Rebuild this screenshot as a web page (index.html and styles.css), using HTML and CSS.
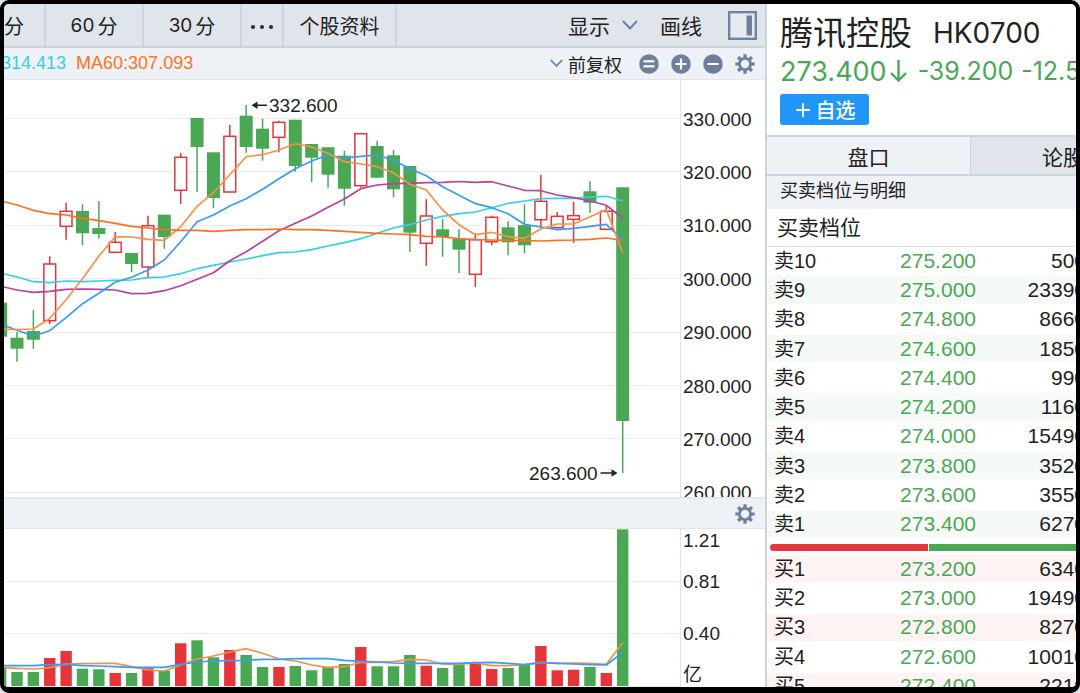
FILE: index.html
```html
<!DOCTYPE html>
<html lang="zh-CN">
<head>
<meta charset="utf-8">
<meta name="viewport" content="width=device-width, initial-scale=1">
<title>腾讯控股 HK0700</title>
<link rel="stylesheet" href="styles.css">
</head>
<body>
<svg class="defs" aria-hidden="true">
  <symbol id="gear" viewBox="0 0 20 20">
    <g fill="none" stroke="currentColor">
      <circle cx="10" cy="10" r="5.6" stroke-width="2.8"/>
      <path stroke-width="3.2" d="M10 0.3v3.4M10 16.3v3.4M0.3 10h3.4M16.3 10h3.4M3.1 3.1l2.4 2.4M14.5 14.5l2.4 2.4M3.1 16.9l2.4-2.4M14.5 5.5l2.4-2.4"/>
    </g>
  </symbol>
</svg>
<div class="frame">
  <main class="chart-side">
    <nav class="toolbar">
      <button class="tab tab-cut">分</button>
      <button class="tab tab-period"><span class="minutes">60</span><span>分</span></button>
      <button class="tab tab-period"><span class="minutes">30</span><span>分</span></button>
      <button class="tab tab-more" aria-label="更多">
        <svg width="24" height="6" viewBox="0 0 24 6"><g fill="#2b2f36"><circle cx="3" cy="3" r="2.1"/><circle cx="12" cy="3" r="2.1"/><circle cx="21" cy="3" r="2.1"/></g></svg>
      </button>
      <button class="tab tab-info">个股资料</button>
      <div class="tools">
        <button class="tool">显示
          <svg width="16" height="10" viewBox="0 0 16 10"><path d="M1 1l7 7.5L15 1" fill="none" stroke="#6f82a3" stroke-width="2"/></svg>
        </button>
        <button class="tool">画线</button>
        <button class="tool tool-panel" aria-label="侧栏">
          <svg width="29" height="29" viewBox="0 0 29 29"><rect x="1.200" y="1.200" width="26.600" height="26.600" fill="#e6ebf1" stroke="#6f82a3" stroke-width="2.400"/><rect x="18.500" y="4.500" width="5.500" height="20" fill="#6f7f9d"/></svg>
        </button>
      </div>
    </nav>

    <div class="legend">
      <span class="ma30">314.413</span>
      <span class="ma60">MA60:307.093</span>
      <button class="adjust">
        <svg width="13" height="9" viewBox="0 0 13 9"><path d="M.8 1l5.700 6L12.200 1" fill="none" stroke="#6f7f9d" stroke-width="1.800"/></svg>
        前复权
      </button>
      <div class="legend-icons">
        <button aria-label="重置"><svg width="20" height="20" viewBox="0 0 20 20"><circle cx="10" cy="10" r="9.800" fill="#6f7f9d"/><rect x="4.500" y="6.200" width="11" height="2.200" fill="#fff"/><rect x="4.500" y="11.200" width="11" height="2.200" fill="#fff"/></svg></button>
        <button aria-label="放大"><svg width="20" height="20" viewBox="0 0 20 20"><circle cx="10" cy="10" r="9.800" fill="#6f7f9d"/><path d="M4.500 10h11M10 4.500v11" stroke="#fff" stroke-width="2.200"/></svg></button>
        <button aria-label="缩小"><svg width="20" height="20" viewBox="0 0 20 20"><circle cx="10" cy="10" r="9.800" fill="#6f7f9d"/><path d="M4.500 10h11" stroke="#fff" stroke-width="2.200"/></svg></button>
        <button aria-label="设置"><svg width="20" height="20"><use href="#gear"/></svg></button>
      </div>
    </div>

    <section class="plot-row price-row">
      <svg class="plot" id="price" viewBox="4 80 676 417" preserveAspectRatio="xMaxYMid slice"></svg>
      <div class="axis price-axis">
        <span>330.000</span><span>320.000</span><span>310.000</span><span>300.000</span>
        <span>290.000</span><span>280.000</span><span>270.000</span><span>260.000</span>
      </div>
    </section>

    <div class="sub-bar">
      <button aria-label="指标设置"><svg width="20" height="20"><use href="#gear"/></svg></button>
    </div>

    <section class="plot-row volume-row">
      <svg class="plot" id="volume" viewBox="4 529 676 158" preserveAspectRatio="xMaxYMid slice"></svg>
      <div class="axis volume-axis">
        <span>1.21</span><span>0.81</span><span>0.40</span><span>亿</span>
      </div>
    </section>
  </main>

  <aside class="quote-side">
    <header class="quote">
      <h1 class="name">腾讯控股 <span class="code">HK0700</span></h1>
      <p class="price">
        <span class="last">273.400</span>
        <svg class="fall" width="19" height="24" viewBox="0 0 19 24"><path d="M9.500 1v20M2 14l7.500 7.500L17 14" fill="none" stroke="#4aa854" stroke-width="2.400"/></svg>
        <span class="change">-39.200</span><span class="change">-12.54%</span>
      </p>
      <button class="watch"><svg width="14" height="14" viewBox="0 0 14 14"><path d="M0 7h14M7 0v14" stroke="#fff" stroke-width="1.800"/></svg>自选</button>
    </header>
    <div class="side-tabs">
      <button class="side-tab active">盘口</button>
      <button class="side-tab">论股</button>
    </div>
    <h2 class="group-title">买卖档位与明细</h2>
    <h3 class="book-title">买卖档位</h3>
    <table class="book sell">
      <tr><th>卖10</th><td>275.200</td><td>500</td></tr>
      <tr><th>卖9</th><td>275.000</td><td>23390</td></tr>
      <tr><th>卖8</th><td>274.800</td><td>8660</td></tr>
      <tr><th>卖7</th><td>274.600</td><td>1850</td></tr>
      <tr><th>卖6</th><td>274.400</td><td>990</td></tr>
      <tr><th>卖5</th><td>274.200</td><td>1160</td></tr>
      <tr><th>卖4</th><td>274.000</td><td>15490</td></tr>
      <tr><th>卖3</th><td>273.800</td><td>3520</td></tr>
      <tr><th>卖2</th><td>273.600</td><td>3550</td></tr>
      <tr><th>卖1</th><td>273.400</td><td>6270</td></tr>
    </table>
    <div class="ratio"><div class="ratio-buy" style="width:50%"></div><div class="ratio-sell"></div></div>
    <table class="book buy">
      <tr><th>买1</th><td>273.200</td><td>6340</td></tr>
      <tr><th>买2</th><td>273.000</td><td>19490</td></tr>
      <tr><th>买3</th><td>272.800</td><td>8270</td></tr>
      <tr><th>买4</th><td>272.600</td><td>10010</td></tr>
      <tr><th>买5</th><td>272.400</td><td>2210</td></tr>
    </table>
  </aside>
</div>
<script src="chart.js"></script>
</body>
</html>
```

FILE: styles.css
```css
* { box-sizing: border-box; }

body {
  margin: 0;
  background: #dfe5eb;
  color: #222;
  font-family: "Liberation Sans", "Noto Sans CJK SC", sans-serif;
}

button {
  margin: 0;
  padding: 0;
  border: 0;
  background: none;
  color: inherit;
  font: inherit;
  white-space: nowrap;
}

svg { display: block; flex: none; }
.defs { display: none; }

.frame {
  display: flex;
  height: 100vh;
  overflow: hidden;
  border: 4px solid #000;
  border-bottom-width: 6px;
  border-radius: 9px;
  background: #fff;
}

.chart-side {
  display: flex;
  flex: 1;
  flex-direction: column;
  min-width: 0;
  border-right: 2px solid #cbd5de;
}

/* Toolbar */
.toolbar {
  display: flex;
  flex: none;
  height: 44px;
  border-bottom: 2px solid #cbd3db;
  background: #dfe5eb;
  font-size: 20px;
}

.tab {
  display: flex;
  align-items: center;
  justify-content: center;
  border-right: 2px solid #ccd4de;
}

.tab-cut { width: 42px; justify-content: flex-start; }
.tab-period { width: 98px; gap: 3px; }
.tab-more { width: 42px; padding-top: 4px; }
.tab-info { width: 113px; }
.minutes { font-family: Inter, sans-serif; font-size: 19px; }

.tools {
  display: flex;
  align-items: center;
  gap: 22px;
  margin-left: auto;
  padding-right: 8px;
  font-size: 21px;
}

.tool { display: flex; align-items: center; gap: 12px; }
.tool-panel { margin-left: 4px; }

/* Moving average legend */
.legend {
  display: flex;
  flex: none;
  align-items: center;
  height: 32px;
  padding-right: 10px;
  border-bottom: 1px solid #e2e5e9;
  background: #eef1f6;
  font-size: 18px;
}

.ma30 { margin-left: -3px; color: #35cfe6; }
.ma60 { margin-left: 10px; color: #fb7424; }

.adjust {
  display: flex;
  align-items: center;
  gap: 5px;
  margin-left: auto;
}

.legend-icons { display: flex; gap: 12px; margin-left: 17px; color: #6f7f9d; }

/* Plots */
.plot-row { display: flex; overflow: hidden; }
.price-row { flex: 1; min-height: 0; }
.volume-row { flex: none; height: 158px; }
.plot { flex: 1; min-width: 0; height: 100%; }

.axis {
  display: grid;
  flex: none;
  align-items: center;
  width: 85px;
  padding-left: 2px;
  border-left: 1px solid #e4e4e4;
  font-size: 19px;
  line-height: 24px;
}

.price-axis { grid-template-rows: repeat(8, 1fr); height: 440px; padding-top: 13px; }
.volume-axis { grid-template-rows: 1fr 2fr 2fr 1fr; }
.volume-axis span:first-child { align-self: start; }
.volume-axis span:last-child { align-self: end; }

.sub-bar {
  display: flex;
  flex: none;
  align-items: center;
  justify-content: flex-end;
  height: 32px;
  padding-right: 10px;
  border-top: 2px solid #e5e8eb;
  border-bottom: 1px solid #e2e4e6;
  background: #eef1f6;
  color: #6f7f9d;
}

.grid { stroke: #ebebeb; stroke-width: 1; }
.up-line { stroke: #e63539; fill: none; }
.up-box { stroke: #e63539; stroke-width: 1.5; fill: #fff; }
.up-bar { fill: #e63539; }
.down-line { stroke: #4aa854; fill: none; }
.down-bar { fill: #4aa854; }
.up-line, .down-line { stroke-width: 1.5; }
.ma { fill: none; stroke-width: 1.7; stroke-linejoin: round; }
.note { fill: #222; font-size: 19px; }
.note-arrow { fill: none; stroke: #222; stroke-width: 1.5; }
.note-head { fill: #222; }

/* Quote panel */
.quote-side { flex: none; width: 309px; overflow: hidden; }

.quote {
  height: 133px;
  padding: 4px 0 0 13px;
  border-bottom: 2px solid #cbd5de;
}

.name {
  display: flex;
  align-items: center;
  gap: 21px;
  height: 45px;
  margin: 0;
  font-size: 33px;
  font-weight: 400;
  white-space: nowrap;
}

.code { padding-top: 4px; font-family: Inter, sans-serif; font-size: 28px; }

.price {
  display: flex;
  align-items: center;
  height: 36px;
  margin: 0;
  color: #4aa854;
  font-family: Inter, sans-serif;
  white-space: nowrap;
}

.last { font-size: 27px; }
.fall { margin: 0 2px; }
.change { margin-left: 8px; font-size: 25px; }

.watch {
  display: flex;
  align-items: center;
  justify-content: center;
  gap: 6px;
  width: 89px;
  height: 31px;
  margin-top: 5px;
  padding-left: 2px;
  border-radius: 3px;
  background: #2196f9;
  color: #fff;
  font-size: 20px;
  font-weight: 500;
}

.side-tabs { display: flex; height: 39px; border-bottom: 2px solid #cbd5de; font-size: 21px; }
.side-tab { flex: none; width: 204px; background: #dfe5eb; }
.side-tab:last-child { padding-left: 71px; text-align: left; }
.side-tab.active { border-right: 1px solid #cbd5de; background: #eef1f5; }

.group-title {
  height: 33px;
  margin: 0;
  padding-left: 13px;
  background: #eef1f5;
  font-size: 18px;
  font-weight: 400;
  line-height: 31px;
}

.book-title {
  height: 38px;
  margin: 0;
  padding-left: 10px;
  border-bottom: 1px solid #e2e2e2;
  font-size: 21px;
  font-weight: 400;
  line-height: 38px;
}

/* Order book: the amount column runs past the visible edge of the panel */
.book {
  width: 319px;
  border-collapse: separate;
  border-spacing: 0;
  table-layout: fixed;
  font-size: 21px;
  line-height: 24px;
}

.sell { height: 293px; }
.buy { height: 147px; }

.book th,
.book td {
  padding: 0;
  border-bottom: 2px solid #fff;
  font-weight: 400;
}

.book th { padding-left: 7px; font-size: 20px; text-align: left; }
.book td { width: 110px; text-align: right; }
.book td:nth-child(2) { color: #4aa854; }
.sell tr:nth-child(even) { background: #f5faf7; }
.buy tr:nth-child(odd) { background: #fef3f3; }

.ratio { display: flex; gap: 1px; width: 316px; height: 7px; margin: 4px 0 4px 3px; }
.ratio-buy { border-radius: 4px 0 0 4px; background: #e63539; }
.ratio-sell { flex: 1; background: #4aa854; }
```

FILE: chart.js
```javascript
const STEP = 16.37;
const X0 = 17;

// [direction, high, body top, body bottom, low, volume top], one entry per bar from index -1
const bars = [
  ['d', 302.7, 302.7, 336.7, 336.7, 667],
  ['d', 332, 337.7, 348.7, 361.7, 672],
  ['d', 310, 331, 339.7, 348.7, 672],
  ['u', 256.3, 264, 320.7, 324.3, 658],
  ['u', 202.7, 211.3, 226.3, 239.7, 651],
  ['d', 204.3, 211, 233.3, 245.3, 668.7],
  ['d', 201, 228, 234, 238.7, 669.3],
  ['u', 232, 242.3, 252.3, 252.3, 673],
  ['d', 253, 253, 264, 272.3, 673],
  ['u', 215.7, 225.7, 267, 277.3, 668.3],
  ['d', 214.7, 214.7, 237, 248.7, 670.7],
  ['u', 153, 157.3, 190.3, 204, 643.3],
  ['d', 118, 118, 147, 191.7, 640.3],
  ['d', 152.3, 152.3, 198, 208, 657.3],
  ['u', 124.7, 136.3, 192, 192, 650],
  ['d', 105, 115.7, 147, 152.7, 655],
  ['d', 118.7, 128.7, 148.7, 160.7, 667],
  ['u', 120.7, 122.3, 137.3, 152.3, 667],
  ['d', 119.7, 119.7, 166, 171.7, 666],
  ['d', 144, 144, 157.7, 182, 670.3],
  ['d', 147.3, 147.3, 174.7, 187.7, 667],
  ['d', 150.7, 155.7, 188.7, 205.7, 664],
  ['u', 133.7, 133.7, 185.7, 187.5, 647],
  ['d', 140.7, 146, 177.7, 177.7, 666.3],
  ['d', 150, 155.3, 189.3, 197.3, 666.3],
  ['d', 166, 166, 232.7, 252, 655],
  ['u', 199.3, 216, 243.3, 265.7, 665.7],
  ['d', 219, 229.3, 237, 256.7, 668],
  ['d', 229.3, 239, 249.7, 273, 665],
  ['u', 233.3, 239.7, 274.3, 287, 663.7],
  ['u', 215.7, 217.3, 241.7, 245.3, 669],
  ['d', 221.3, 227.3, 242.3, 255.3, 668],
  ['d', 204.3, 225, 245.3, 253.3, 665],
  ['u', 175, 201.3, 219.7, 227.7, 646],
  ['u', 212, 216.3, 227.7, 227.7, 670.3],
  ['u', 201.7, 215.7, 219.3, 243, 669.7],
  ['d', 181.3, 191.3, 202.7, 213, 667],
  ['u', 205.7, 211.3, 229.3, 229.3, 673],
  ['d', 187.3, 187.3, 421, 473, 529.3]
];

// Each series starts at the left edge of the plot, followed by one value per bar from index 0
const priceLines = {
  '#35cfe6': [274, 277, 281.7, 282.7, 281, 281.7, 281, 280.3, 280, 277.7, 277, 273.7, 268.7, 265.3, 262, 259, 255.7, 252.7, 252, 249.7, 246, 242.7, 238.7, 233.3, 228, 224.7, 220, 216.3, 213.7, 212, 207.7, 203.3, 201, 198.7, 198.3, 198.3, 197, 196.3, 201],
  '#b8409f': [287, 290, 292.3, 291.3, 289.3, 289, 289.3, 290, 293.7, 293.3, 290.7, 285.7, 279.3, 272.7, 260.7, 251.7, 241.3, 230.7, 223.3, 216, 207.3, 199, 188.7, 185, 183.7, 183.3, 182.7, 182.3, 181.5, 182.3, 181.7, 186, 190.3, 190.7, 195, 197.7, 201, 205.3, 218],
  '#3a9bf5': [325.3, 330.3, 336, 330.7, 317.7, 303.7, 293.3, 282.3, 277.3, 270, 260, 241.7, 221.7, 215, 206, 198.7, 189.3, 178.7, 168.7, 161, 155, 158, 156.3, 155, 160.3, 168.7, 175.7, 186.7, 195.3, 203.7, 207.7, 213.7, 224.3, 227, 229.7, 228.3, 226.3, 224.3, 240],
  '#f6914a': [329.3, 329.5, 329, 318.5, 299.7, 278.7, 256, 236.7, 237, 239.3, 240.3, 226.7, 206.3, 192.7, 174.7, 156.7, 154.7, 150, 143.7, 147, 153.3, 161.7, 164, 166.7, 172.7, 184.3, 190, 210, 224.7, 234.7, 232.3, 236.7, 238.3, 229, 224, 224, 216.7, 209.7, 252.7],
  '#fa7220': [201.7, 205, 210.3, 213.7, 215, 218.3, 220.7, 223.3, 226.3, 228, 229.7, 230.3, 230.3, 231.3, 230.3, 229.7, 229.7, 229, 229.7, 229.7, 230.3, 231.3, 232.3, 233.3, 234, 234.7, 236.3, 237, 238.7, 239.7, 240, 240.3, 240.7, 241, 240.3, 240, 239.3, 238, 240.3]
};

const volumeLines = {
  '#f6914a': [667.7, 668.3, 669, 667.7, 664, 663.7, 663.3, 663.3, 666.7, 670, 671, 665, 659, 656, 652, 648.7, 653.3, 659, 661, 665, 667.3, 666.7, 662.3, 662.3, 661.7, 659.3, 660, 664, 664.3, 663, 665.7, 665.7, 664.7, 662.3, 663.3, 663, 663.3, 664.3, 642.7],
  '#3a9bf5': [665.7, 665.7, 665.7, 664.7, 664.3, 665.7, 666, 666.7, 667.3, 667.3, 667.3, 664.3, 662, 661, 660.7, 660.3, 659.3, 659.3, 658.7, 658.7, 658.7, 660.3, 661.3, 662, 663, 663.3, 663.3, 663.3, 663.3, 662.7, 662.3, 663.3, 664.7, 662.7, 663.3, 664, 664.7, 665, 652.3]
};

const xAt = i => X0 + i * STEP;
const rows = ys => ys.map(y => `<path class="grid" d="M4 ${y}H680"/>`).join('');

function lines(set) {
  return Object.entries(set).map(([color, ys]) => {
    const points = ys.map((y, k) => `${k === 0 ? 4 : xAt(k - 1).toFixed(1)},${y}`).join(' ');
    return `<polyline class="ma" stroke="${color}" points="${points}"/>`;
  }).join('');
}

function candle([dir, high, top, bottom, low], k) {
  const x = xAt(k - 1);
  if (dir === 'd') {
    return `<path class="down-line" d="M${x} ${high}V${low}"/>` +
      `<rect class="down-bar" x="${x - 6.5}" y="${top}" width="13" height="${bottom - top}"/>`;
  }
  return `<path class="up-line" d="M${x} ${high}V${top}M${x} ${bottom}V${low}"/>` +
    `<rect class="up-box" x="${x - 5.9}" y="${top}" width="11.8" height="${bottom - top}"/>`;
}

function volume(bar, k) {
  const cls = bar[0] === 'd' ? 'down-bar' : 'up-bar';
  return `<rect class="${cls}" x="${xAt(k - 1) - 5.7}" y="${bar[5]}" width="11.4" height="${686 - bar[5]}"/>`;
}

document.getElementById('price').innerHTML =
  rows([118.5, 171.5, 225.5, 278.5, 332.5, 385.5, 438.5, 492.5]) +
  bars.map(candle).join('') +
  lines(priceLines) +
  '<path class="note-arrow" d="M254 105.200H267"/><path class="note-head" d="M251.500 105.200l6-3.700v7.400z"/>' +
  '<text class="note" x="269" y="112">332.600</text>' +
  '<path class="note-arrow" d="M600.500 473H615"/><path class="note-head" d="M617.500 473l-6-3.700v7.400z"/>' +
  '<text class="note" x="529" y="480">263.600</text>';

document.getElementById('volume').innerHTML =
  rows([581.5, 633.5, 686.5]) + bars.map(volume).join('') + lines(volumeLines);
```
